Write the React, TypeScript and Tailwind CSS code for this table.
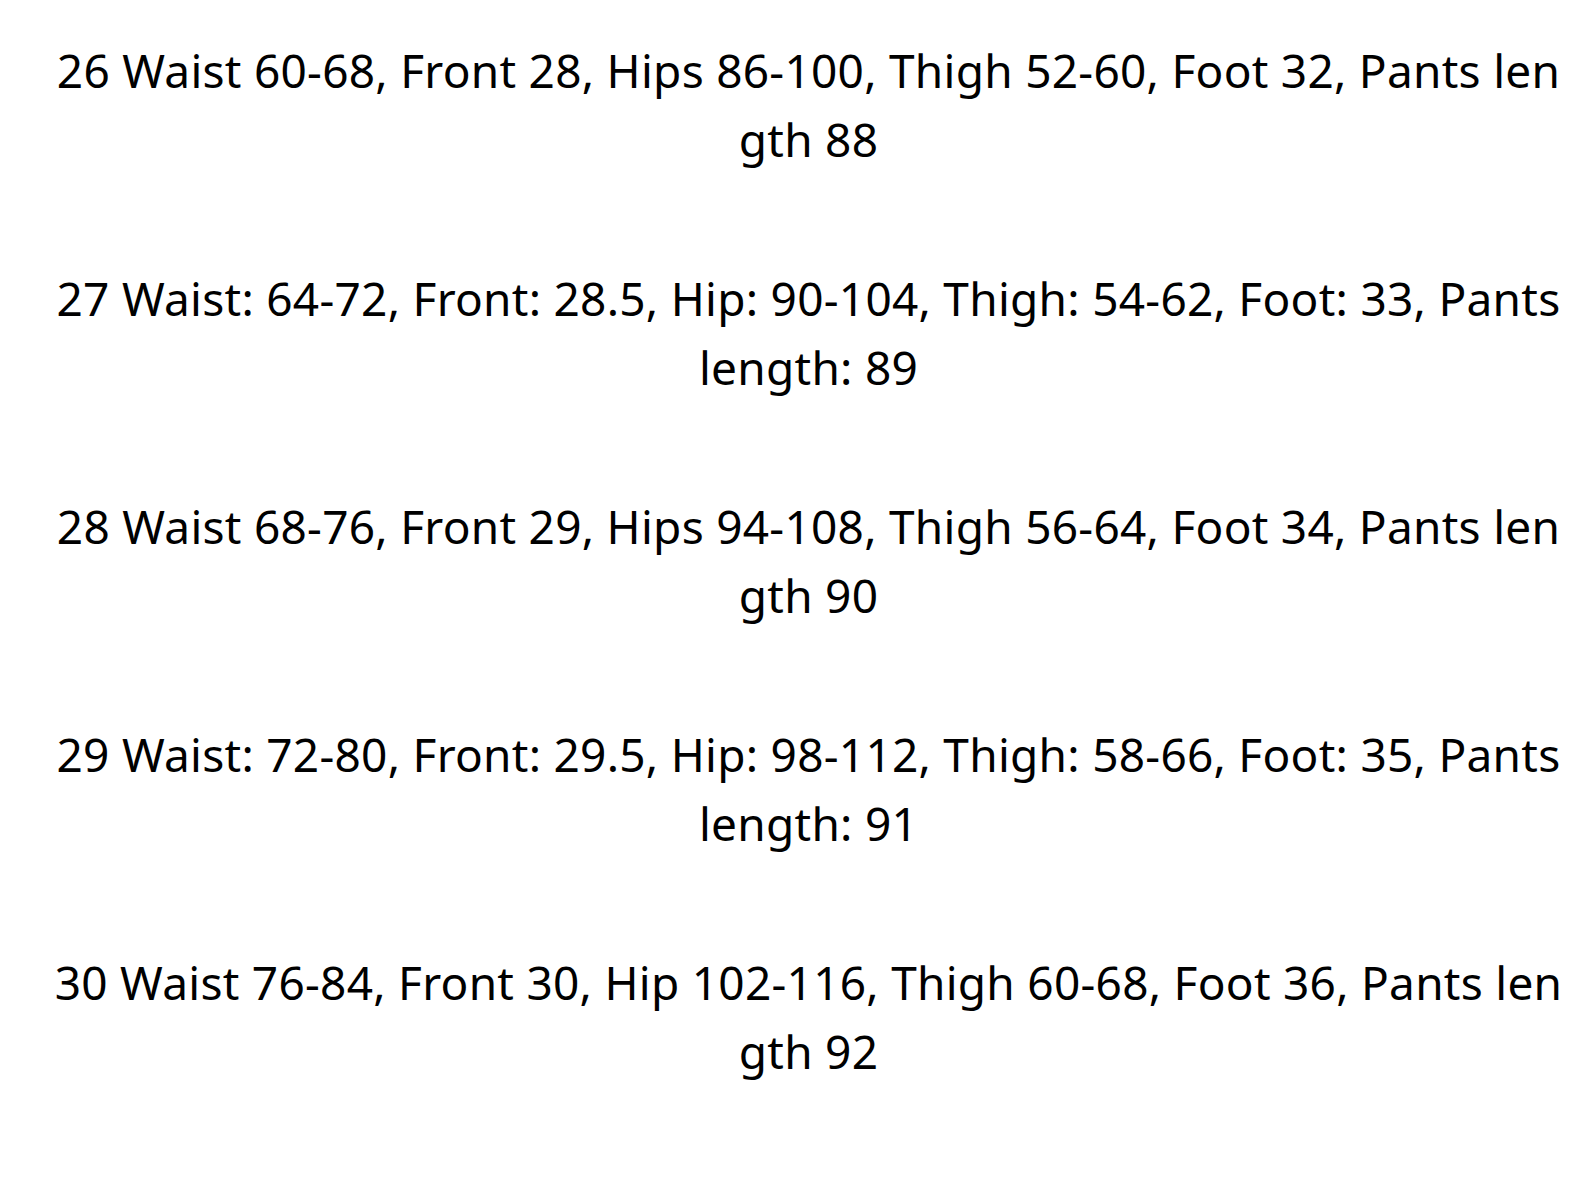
const rows: [string, string][] = [
  ["26 Waist 60-68, Front 28, Hips 86-100, Thigh 52-60, Foot 32, Pants len", "gth 88"],
  ["27 Waist: 64-72, Front: 28.5, Hip: 90-104, Thigh: 54-62, Foot: 33, Pants", "length: 89"],
  ["28 Waist 68-76, Front 29, Hips 94-108, Thigh 56-64, Foot 34, Pants len", "gth 90"],
  ["29 Waist: 72-80, Front: 29.5, Hip: 98-112, Thigh: 58-66, Foot: 35, Pants", "length: 91"],
  ["30 Waist 76-84, Front 30, Hip 102-116, Thigh 60-68, Foot 36, Pants len", "gth 92"],
]

export default function App() {
  return (
    <div
      className="min-h-screen bg-white text-black pl-[26px] pt-[36px]"
      style={{ fontFamily: '"Noto Sans", "Open Sans", sans-serif' }}
    >
      <div className="flex flex-col gap-[90px]">
        {rows.map(([a, b]) => (
          <p key={a} className="text-center text-[46px] leading-[69px] tracking-[0.27px]">
            <span className="block whitespace-nowrap">{a}</span>
            <span className="block whitespace-nowrap">{b}</span>
          </p>
        ))}
      </div>
    </div>
  )
}
